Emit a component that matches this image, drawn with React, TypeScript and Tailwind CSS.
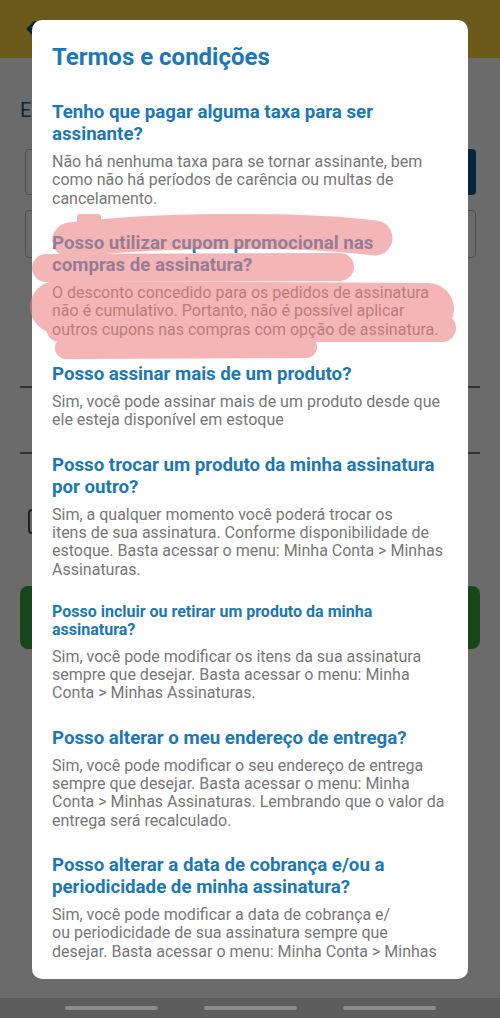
import React from 'react';
import { ArrowLeft } from 'lucide-react';

type Faq = {
  q: string[];
  a: string[];
  small?: boolean;
};

const FAQS: Faq[] = [
  {
    q: ['Tenho que pagar alguma taxa para ser', 'assinante?'],
    a: [
      'Não há nenhuma taxa para se tornar assinante, bem',
      'como não há períodos de carência ou multas de',
      'cancelamento.',
    ],
  },
  {
    q: ['Posso utilizar cupom promocional nas', 'compras de assinatura?'],
    a: [
      'O desconto concedido para os pedidos de assinatura',
      'não é cumulativo. Portanto, não é possível aplicar',
      'outros cupons nas compras com opção de assinatura.',
    ],
  },
  {
    q: ['Posso assinar mais de um produto?'],
    a: ['Sim, você pode assinar mais de um produto desde que', 'ele esteja disponível em estoque'],
  },
  {
    q: ['Posso trocar um produto da minha assinatura', 'por outro?'],
    a: [
      'Sim, a qualquer momento você poderá trocar os',
      'itens de sua assinatura. Conforme disponibilidade de',
      'estoque. Basta acessar o menu: Minha Conta > Minhas',
      'Assinaturas.',
    ],
  },
  {
    q: ['Posso incluir ou retirar um produto da minha', 'assinatura?'],
    a: [
      'Sim, você pode modificar os itens da sua assinatura',
      'sempre que desejar. Basta acessar o menu: Minha',
      'Conta > Minhas Assinaturas.',
    ],
    small: true,
  },
  {
    q: ['Posso alterar o meu endereço de entrega?'],
    a: [
      'Sim, você pode modificar o seu endereço de entrega',
      'sempre que desejar. Basta acessar o menu: Minha',
      'Conta > Minhas Assinaturas. Lembrando que o valor da',
      'entrega será recalculado.',
    ],
  },
  {
    q: ['Posso alterar a data de cobrança e/ou a', 'periodicidade de minha assinatura?'],
    a: [
      'Sim, você pode modificar a data de cobrança e/',
      'ou periodicidade de sua assinatura sempre que',
      'desejar. Basta acessar o menu: Minha Conta > Minhas',
    ],
  },
];

function FaqItem({ item }: { item: Faq }) {
  return (
    <div>
      <h3
        className={`mb-2 font-bold text-[#1b78b5] whitespace-nowrap ${
          item.small ? 'text-[16px] leading-[18.33px]' : 'text-[18.7px] leading-[22px]'
        }`}
      >
        {item.q.map((line) => (
          <span key={line} className="block">
            {line}
          </span>
        ))}
      </h3>
      <p className="text-[16px] leading-[18.33px] text-[#777777] whitespace-nowrap">
        {item.a.map((line) => (
          <span key={line} className="block">
            {line}
          </span>
        ))}
      </p>
    </div>
  );
}

export default function App() {
  return (
    <div className="relative w-[500px] h-[1018px] overflow-hidden bg-white font-['Roboto',sans-serif]">
      {/* Page behind the dialog */}
      <div className="flex flex-col h-full">
        <header className="h-[58px] bg-[#ffd63e] flex items-center px-[23px] flex-shrink-0">
          <ArrowLeft className="w-6 h-6 text-[#0d4f86]" strokeWidth={2.5} />
        </header>
        <main className="flex-1 px-[20px] pt-[41px] flex flex-col">
          <p className="text-[20px] leading-[23px] text-[#1b5d8c]">Escolha sua assinatura</p>
          <div className="mt-[27px] flex gap-3 px-[5px] pr-[4px]">
            <div className="flex-1 h-[46px] border border-[#bdbdbd] rounded" />
            <div className="w-[90px] h-[46px] bg-[#0b5c99] rounded" />
          </div>
          <div className="mt-[15px] mx-[5px] mr-[4px] h-[48px] border border-[#bdbdbd] rounded" />
          <div className="mt-[128px] h-[2px] bg-[#7a7a7a]" />
          <div className="mt-[64px] h-[2px] bg-[#7a7a7a]" />
          <div className="mt-[55px] ml-[8px] w-[24px] h-[25px] border-2 border-[#4a4a4a] rounded-sm" />
          <div className="mt-[52px] h-[63px] bg-[#36a83e] rounded-lg" />
        </main>
      </div>

      {/* Scrim */}
      <div className="absolute inset-0 bg-black/[0.58]" />

      {/* System nav bar */}
      <nav className="absolute bottom-0 left-0 right-0 h-[20px] bg-[#5d5d5d] flex justify-center gap-[46px] pt-[8px]">
        <span className="w-[93px] h-[4px] rounded-full bg-[#8c8c8c]" />
        <span className="w-[93px] h-[4px] rounded-full bg-[#8c8c8c]" />
        <span className="w-[93px] h-[4px] rounded-full bg-[#8c8c8c]" />
      </nav>

      {/* Dialog */}
      <section className="absolute left-[32px] top-[20px] w-[436px] h-[959px] bg-white rounded-[10px] flex flex-col px-[20px] pt-[23px] pb-[18px]">
        <h2 className="text-[24px] leading-[28px] font-bold text-[#1b78b5] mb-[30px]">Termos e condições</h2>
        <div className="flex-1 min-h-0 overflow-hidden flex flex-col gap-6">
          {FAQS.map((item) => (
            <FaqItem key={item.q[0]} item={item} />
          ))}
        </div>
      </section>

      {/* Highlighter scribble */}
      <svg
        className="absolute inset-0 pointer-events-none"
        width="500"
        height="1018"
        viewBox="0 0 500 1018"
      >
        <g opacity="0.58" stroke="#ec8080" fill="#ec8080" strokeLinecap="round" strokeLinejoin="round">
          <rect x="77" y="214" width="24" height="13" rx="3" stroke="none" />
          <path d="M70 240 C150 230 300 228 375 238" strokeWidth="35" fill="none" />
          <path d="M46 268 L340 267" strokeWidth="28" fill="none" />
          <path d="M56 307 L428 309" strokeWidth="52" fill="none" />
          <path d="M60 328 L442 328" strokeWidth="28" fill="none" />
          <path d="M66 348 L306 347" strokeWidth="22" fill="none" />
        </g>
      </svg>
    </div>
  );
}
